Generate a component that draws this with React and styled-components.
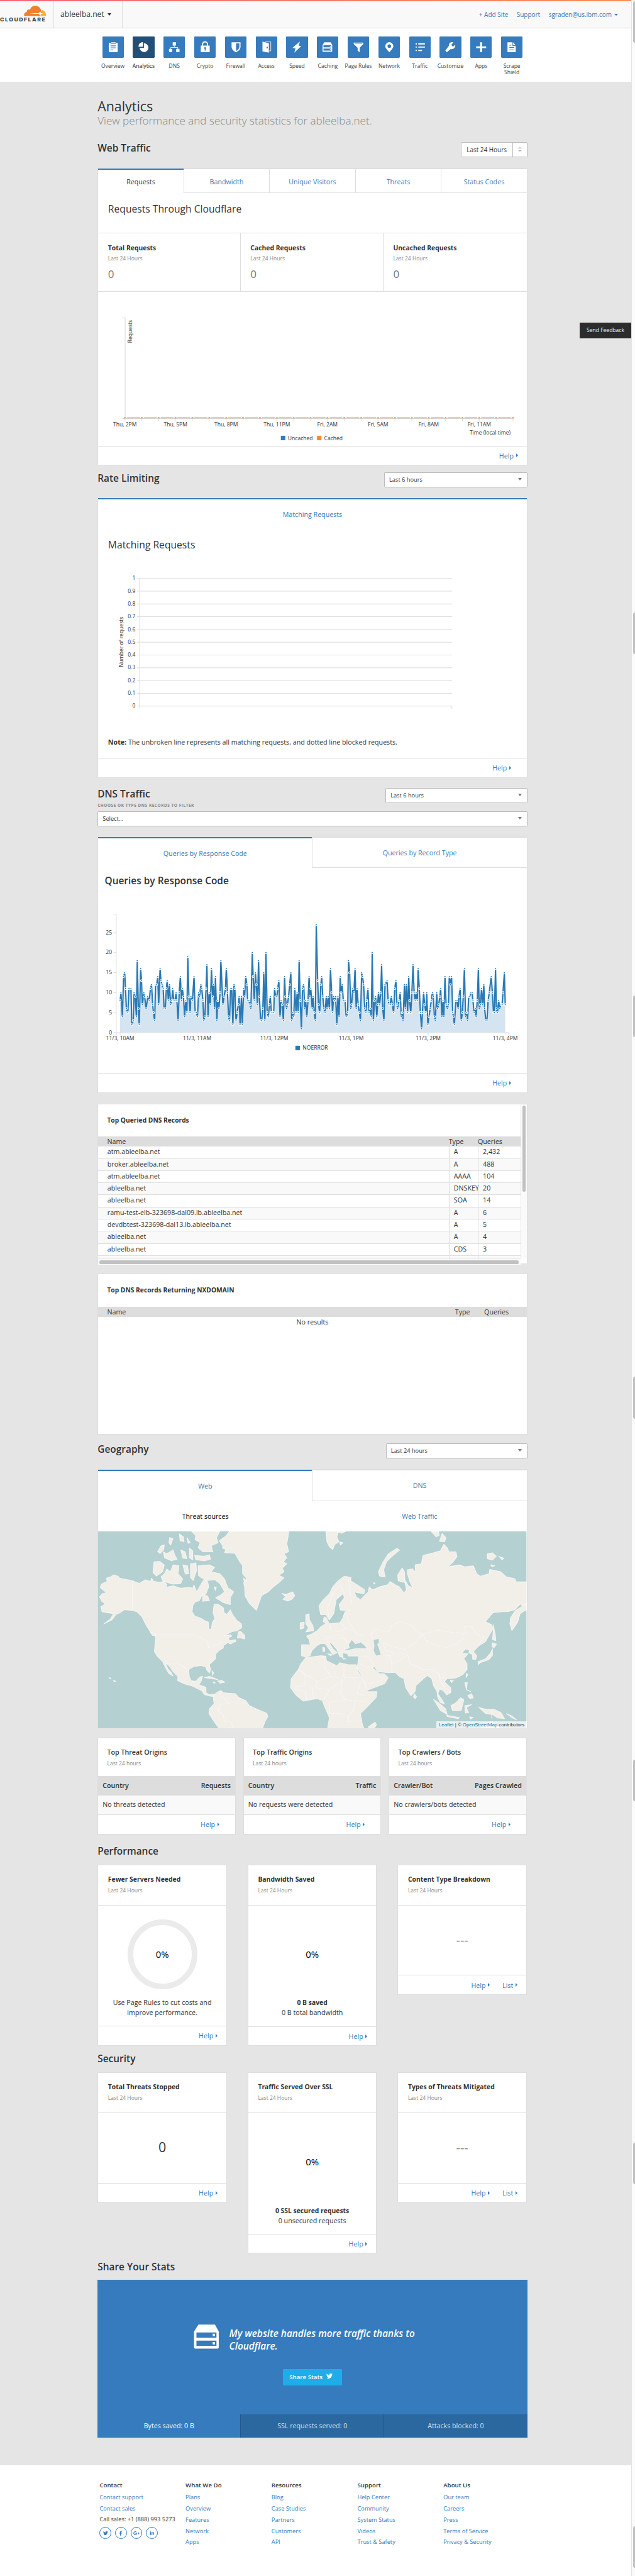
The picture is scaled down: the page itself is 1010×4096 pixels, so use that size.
import React from "react";
import styled, { createGlobalStyle, css } from "styled-components";
import { FaTwitter, FaFacebookF, FaGooglePlusG, FaLinkedinIn } from "react-icons/fa";

const blue = "#357bbd";
const line = "#dedede";
const ink = "#333";

const GlobalStyle = createGlobalStyle`
  *, *::before, *::after { box-sizing: border-box; }
  html, body { margin: 0; padding: 0; background: #fafafa; overflow: hidden; }
  body { font-family: "Open Sans", "Noto Sans", sans-serif; color: ${ink}; }
`;

/* The design is drawn on a 1418px wide canvas and zoomed down as a whole. */
const Shell = styled.div`
  zoom: 0.712;
  display: flex;
  width: 1418.5px;
  height: 5752.8px;
  overflow: hidden;
  font-size: 15px;
`;
const Page = styled.div`
  width: 1410px;
  flex: none;
  background: #e5e5e5;
  position: relative;
`;
const ScrollRail = styled.div`
  flex: 1;
  display: flex;
  flex-direction: column;
  background: #fafafa;
  border-left: 1px solid #e4e4e4;
  padding: 3px 0 0 3px;
`;
const Thumb = styled.div`
  flex: none;
  height: 93px;
  margin-bottom: ${(p) => p.$gap}px;
  background: #c1c1c1;
  border-radius: 6px 0 0 6px;
`;

/* ---------- header ---------- */
const Rainbow = styled.div`
  height: 3px;
  background: linear-gradient(90deg, #f4687a, #f98f57);
`;
const TopBar = styled.header`
  display: flex;
  height: 60px;
  background: #f9f9f9;
  border-bottom: 1px solid #d9d9d9;
`;
const LogoCell = styled.div`
  width: 121px;
  border-right: 1px solid ${line};
`;
const SiteCell = styled.div`
  width: 153px;
  border-right: 1px solid ${line};
  display: flex;
  align-items: center;
  padding: 0 0 1px 14px;
  font-size: 17px;
  gap: 7px;
`;
const Caret = styled.span`
  border: solid transparent;
  border-width: ${(p) => p.$h}px ${(p) => p.$w / 2}px 0;
  border-top-color: currentColor;
`;
const UserLinks = styled.nav`
  flex: 1;
  display: flex;
  justify-content: flex-end;
  align-items: center;
  gap: 19px;
  padding: 1px 29px 0 0;
  font-size: 14px;
  color: ${blue};
  span { display: flex; align-items: center; gap: 6px; }
`;
const AppNav = styled.nav`
  height: 119px;
  padding: 18px 0 0 218px;
  background: #fff;
  display: grid;
  grid-template-columns: repeat(14, 68.57px);
`;
const AppItem = styled.div`
  display: flex;
  flex-direction: column;
  align-items: center;
  font-size: 12px;
  line-height: 14px;
  text-align: center;
  color: ${(p) => (p.$active ? "#111" : "#444")};
  span { margin-top: 13.5px; max-width: 64px; }
`;
const Tile = styled.svg`
  width: 48px;
  height: 48px;
  border-radius: 2px;
  background: ${(p) => (p.$active ? "#224f78" : blue)};
  fill: #fff;
`;

/* ---------- section scaffolding ---------- */
const Content = styled.main`
  width: 1178px;
  height: 5324px;
  padding: 36.7px 0 0 218px;
`;
const PageTitle = styled.h1`
  margin: 0;
  font-size: 30px;
  font-weight: 400;
  line-height: 36px;
`;
const PageSub = styled.p`
  margin: 0;
  font-size: 24px;
  font-weight: 300;
  line-height: 32px;
  color: #888;
`;
const SectionHead = styled.div`
  display: flex;
  justify-content: space-between;
  align-items: flex-start;
  height: ${(p) => p.$h}px;
  padding-top: ${(p) => p.$top}px;
`;
const Heading = styled.h2`
  margin: 0;
  font-size: 21.7px;
  font-weight: 600;
  line-height: 30px;
  white-space: nowrap;
`;
const Select = styled.div`
  display: flex;
  align-items: center;
  justify-content: space-between;
  width: ${(p) => p.$w}px;
  height: ${(p) => p.$h || 34}px;
  margin: ${(p) => p.$m || "1.6px 0 0"};
  padding: 0 11px 2px 10px;
  border: 1px solid #bbb;
  border-radius: 2px;
  background: #fff;
  font-size: 13px;
  i { color: #777; margin-top: -2px; }
`;
const Stepper = styled.div`
  display: flex;
  width: 149px;
  height: 34px;
  margin-top: 1.5px;
  border: 1px solid #bbb;
  border-radius: 2px;
  background: #fff;
  font-size: 14px;
  line-height: 32px;
  span { flex: 1; padding-left: 12px; border-right: 1px solid #bbb; }
  div { width: 31px; display: flex; flex-direction: column; align-items: center; justify-content: center; gap: 4px; }
`;
const Tri = styled.i`
  border: solid transparent;
  border-width: ${(p) => (p.$up ? "0 4.5px 4px" : "4px 4.5px 0")};
  border-${(p) => (p.$up ? "bottom" : "top")}-color: #aaa;
`;
const Card = styled.section`
  height: ${(p) => p.$h}px;
  margin-bottom: ${(p) => p.$mb || 0}px;
  border: 1px solid ${line};
  background: #fff;
`;
const Tabs = styled.div`
  display: flex;
  height: ${(p) => p.$h}px;
  margin-top: -1px;
`;
const Tab = styled.div`
  flex: 1;
  text-align: center;
  color: ${(p) => p.$color || blue};
  line-height: ${(p) => p.$lh}px;
  border-top: 1px solid ${line};
  border-bottom: 1px solid ${line};
  border-left: 1px solid ${line};
  ${(p) => p.$active && css`
    border-top: 3px solid ${blue};
    border-bottom-color: #fff;
    border-left: 0;
  `}
`;
const CardTitle = styled.h3`
  margin: 0;
  padding: ${(p) => p.$pad};
  font-size: ${(p) => (p.$weight ? 21.7 : 22)}px;
  font-weight: ${(p) => p.$weight || 400};
  line-height: 30px;
`;
const StatRow = styled.div`
  display: grid;
  grid-template-columns: 318px 319px 1fr;
  height: 132px;
  border-top: 1px solid ${line};
  border-bottom: 1px solid ${line};
`;
const Stat = styled.div`
  padding: 20px 0 0 22px;
  border-right: 1px solid ${line};
  &:last-child { border-right: 0; }
  h4 { margin: 0; font-size: 14.6px; line-height: 24px; font-weight: 700; }
  p { margin: 0; font-size: 12px; line-height: 20px; color: #888; padding-top: 2px; }
  b { display: block; font-size: 24px; font-weight: 400; line-height: 30px; color: #777; margin-top: 9px; }
`;
const Foot = styled.div`
  display: flex;
  justify-content: flex-end;
  align-items: center;
  gap: 28px;
  height: ${(p) => p.$h || 44}px;
  padding: 0 ${(p) => p.$r}px 0 0;
  border-top: 1px solid ${line};
  color: ${blue};
`;
const HelpLink = styled.a`
  display: flex;
  align-items: center;
  gap: 5px;
  &::after {
    content: "";
    margin-top: -1px;
    border: solid transparent;
    border-width: 5px 0 5px 5px;
    border-left-color: ${blue};
  }
`;
const Plot = styled.svg`
  display: block;
  width: 957px;
  height: ${(p) => p.$h}px;
  font-size: 12px;
  fill: ${ink};
`;
const Note = styled.p`
  margin: 0;
  height: ${(p) => p.$h}px;
  padding: 17px 0 0 22px;
  line-height: 22px;
  b { font-weight: 700; }
`;
const FilterLabel = styled.div`
  font-size: 9px;
  font-weight: 700;
  letter-spacing: 0.8px;
  line-height: 14px;
  color: #888;
`;

/* ---------- DNS tables ---------- */
const TableTitle = styled.h4`
  margin: 0;
  height: 72px;
  padding: 24px 0 0 20px;
  font-size: 14.4px;
  font-weight: 700;
  line-height: 24px;
`;
const TableHead = styled.div`
  display: grid;
  grid-template-columns: 1fr 65px ${(p) => p.$last}px;
  height: 23px;
  line-height: 23px;
  padding-left: 20px;
  background: #ddd;
`;
const ScrollBody = styled.div`
  display: flex;
  height: 344px;
`;
const ScrollView = styled.div`
  width: 943px;
  overflow: hidden;
`;
const Track = styled.div`
  flex: 1;
  background: #fafafa;
  border-left: 1px solid #e6e6e6;
  padding: 3px 3px 0;
  &::before { content: ""; display: block; height: 193px; border-radius: 4px; background: #c1c1c1; }
`;
const TrackX = styled.div`
  height: 14px;
  width: 943px;
  padding: 3px 4px 0 3px;
  border-top: 1px solid #e6e6e6;
  background: #fafafa;
  &::before { content: ""; display: block; height: 8px; border-radius: 4px; background: #c1c1c1; }
`;
const Row = styled.div`
  display: grid;
  grid-template-columns: 1fr 65px 95px;
  height: 27.07px;
  line-height: 25px;
  border-bottom: 1px solid ${line};
  &:nth-child(even) { background: #f9f9f9; }
  span { border-left: 1px solid ${line}; padding-left: 10px; white-space: nowrap; }
  span:first-child { border: 0; padding-left: 20.5px; }
`;
const Empty = styled.div`
  text-align: center;
  line-height: 23px;
`;

/* ---------- map ---------- */
const SubTabs = styled.div`
  display: grid;
  grid-template-columns: 1fr 1fr;
  height: 67.5px;
  line-height: 69px;
  text-align: center;
  color: ${blue};
  span:first-child { color: #000; }
`;
const MapBox = styled.div`
  position: relative;
  height: 440px;
  svg { display: block; width: 957px; height: 440px; }
`;
const Credit = styled.div`
  position: absolute;
  right: 0;
  bottom: 0;
  height: 16px;
  padding: 0 5px;
  background: rgba(255, 255, 255, 0.7);
  font: 11px/16px "Liberation Sans", Arial, sans-serif;
  white-space: nowrap;
  a { color: #0078a8; }
`;

/* ---------- small cards ---------- */
const CardRow = styled.div`
  display: grid;
  grid-template-columns: repeat(3, 1fr);
  column-gap: ${(p) => p.$gap}px;
  align-items: start;
  width: 959px;
  height: ${(p) => p.$h}px;
`;
const MiniHead = styled.div`
  height: ${(p) => p.$h}px;
  padding: ${(p) => p.$pad};
  border-bottom: ${(p) => (p.$rule ? `1px solid ${line}` : "0")};
  h4 {
    margin: 0;
    font-size: ${(p) => (p.$rule ? 14.6 : 15)}px;
    line-height: 24px;
    font-weight: ${(p) => (p.$rule ? 700 : 600)};
    white-space: nowrap;
  }
  p { margin: 2px 0 0; font-size: 12px; line-height: 20px; color: #888; }
`;
const OriginHead = styled.div`
  display: flex;
  justify-content: space-between;
  height: 44px;
  padding: 0 10px;
  line-height: 43px;
  font-weight: 600;
  background: #ddd;
`;
const OriginBody = styled.div`
  height: 42px;
  padding-left: 10px;
  line-height: 42px;
  background: #f9f9f9;
`;
const Figure = styled.div`
  height: ${(p) => p.$h}px;
  padding-top: ${(p) => p.$top}px;
  text-align: center;
  line-height: 22.5px;
  b { font-weight: 700; font-size: 14.6px; }
`;
const BigText = styled.div`
  font-size: ${(p) => p.$size}px;
  line-height: 40px;
  color: ${(p) => p.$color};
  font-weight: ${(p) => p.$weight || 400};
`;
const Ring = styled.div`
  width: 156px;
  height: 156px;
  margin: 0 auto 19px;
  border: 14px solid ${(p) => (p.$bare ? "transparent" : "#ebebeb")};
  border-radius: 50%;
  display: flex;
  align-items: center;
  justify-content: center;
  font-size: 21px;
  color: #000;
`;

/* ---------- share banner ---------- */
const Banner = styled.section`
  display: flex;
  flex-direction: column;
  align-items: center;
  height: 352px;
  background: ${blue};
  color: #fff;
`;
const Quote = styled.div`
  display: flex;
  width: 960px;
  height: 199px;
  padding: 98px 0 0 214px;
  gap: 23px;
  font-size: 21.6px;
  font-weight: 600;
  font-style: italic;
  line-height: 28px;
  p { margin: 9px 0 0; width: 430px; }
  svg { width: 57px; height: 57px; fill: #fff; }
`;
const ShareButton = styled.button`
  display: flex;
  align-items: center;
  width: 133px;
  height: 36px;
  padding: 0 0 0 15px;
  gap: 9px;
  border: 0;
  border-radius: 2px;
  background: #1fadea;
  color: #fff;
  font: 600 13.6px "Open Sans", sans-serif;
  svg { margin-top: -6px; }
`;
const ShareTabs = styled.div`
  display: grid;
  grid-template-columns: 319px 320px 1fr;
  width: 960px;
  height: 52px;
  margin-top: auto;
  line-height: 51px;
  text-align: center;
`;
const ShareTab = styled.div`
  ${(p) => !p.$active && css`
    background: #2b689f;
    border-left: 1px solid #245888;
    color: #d5e1ec;
  `}
`;

/* ---------- footer ---------- */
const Footer = styled.footer`
  height: 247px;
  padding: 32px 0 0 222.5px;
  background: #fff;
  display: grid;
  grid-template-columns: repeat(5, 192px);
  font-size: 13px;
  color: ${blue};
`;
const FootCol = styled.div`
  display: flex;
  flex-direction: column;
  line-height: 25px;
  white-space: nowrap;
  h5 { margin: 0 0 2px; font-size: 13.6px; font-weight: 600; line-height: 25px; color: ${ink}; }
  em { font-style: normal; color: ${ink}; margin-top: -1px; }
`;
const Socials = styled.div`
  display: flex;
  gap: 8px;
  margin-top: 5px;
`;
const Social = styled.a`
  width: 26.5px;
  height: 26.5px;
  display: flex;
  align-items: center;
  justify-content: center;
  border: 1px solid ${blue};
  border-radius: 50%;
`;
const Feedback = styled.button`
  position: absolute;
  right: 0;
  top: 720px;
  width: 115px;
  height: 35px;
  border: 0;
  background: #2c2c2c;
  color: #eee;
  font: 12px "Open Sans", sans-serif;
`;

const ServerShape = () => (
  <path fillRule="evenodd" d="M16.5 13H31L34.3 19V32.8a1.2 1.2 0 0 1-1.2 1.2H13.9a1.2 1.2 0 0 1-1.2-1.2V19zM14.8 19.8v4.6h17.5v-4.6zM14.8 27v4.6h17.5V27zM29 21h2v2h-2zM29 28.3h2v2h-2z" />
);

const navItems = [
  ["Overview", <path fillRule="evenodd" d="M14.3 14H18v2.6h12V14h4v21H14.3zM19.3 13h10v2.2h-10zM18 20v1.6h12V20zM18 24.5V26h12v-1.5zM18 29v1.5h6V29z" />],
  ["Analytics", <g><path d="M25.2 15.2A9.8 9.8 0 1 1 15.6 25.8h9.6z" /><path d="M23 12.5V23H12.8A10.3 10.3 0 0 1 23 12.5z" /></g>],
  ["DNS", <g><path d="M20.6 13H28v7.3h-7.4zM12.3 27.7h7.4V35h-7.4zM28.4 27.7h7.4V35h-7.4z" /><path d="M24.2 20v4.5M16 28v-3.5h16V28" fill="none" stroke="#fff" strokeWidth="1.2" /></g>],
  ["Crypto", <g><path d="M18.500 21v-3.500a5.500 5.500 0 0 1 11 0V21" fill="none" stroke="#fff" strokeWidth="2.600" /><path fillRule="evenodd" d="M14.500 20.500h20V35h-20zM24.300 24a2 2 0 0 0-1 3.800V31.500h2v-3.700a2 2 0 0 0-1-3.800z" /></g>],
  ["Firewall", <path fillRule="evenodd" d="M14.500 13h20v10c0 6-5 10-10 12.500C19.500 33 14.500 29 14.500 23zM24.500 15.500V32.500c4-2.500 7.500-5.500 7.500-9.800v-7.200z" />],
  ["Access", <g><path d="M21 12h12.300v20.300H29.500" fill="none" stroke="#fff" strokeWidth="1.200" /><path fillRule="evenodd" d="M14.700 11.400L29 15v21l-14.300-2.700zM25.200 22.800a1.500 2 0 1 0 0 4 1.500 2 0 0 0 0-4z" /></g>],
  ["Speed", <path d="M30.800 11.300L13.900 25.700l7.100.7L18.400 36l15.500-14.600-5.400-.5z" />],
  ["Caching", <ServerShape />],
  ["Page Rules", <path fillRule="evenodd" d="M13.500 13.700h21.200v3l-8 8.600V35L22.300 32v-6.700l-8.800-8.600zM15.500 15v1.300h17.200V15z" />],
  ["Network", <path fillRule="evenodd" d="M24.200 12.700a9 9 0 0 0-9 9c0 4 4.500 8.500 9 13.400 4.500-4.900 9-9.400 9-13.400a9 9 0 0 0-9-9zm0 4.800a4 4 0 1 1 0 8 4 4 0 0 1 0-8z" />],
  ["Traffic", <path d="M14 15h3v3h-3zM20 15h15v3H20zM14 22.300h3v2.800h-3zM20 22.300h15v2.800H20zM14 29.600h3v3h-3zM20 29.600h8.500v3H20z" />],
  ["Customize", <path d="M31 13.300c-5-2-10.300 1.300-9.900 7.300L13 31.500l3.500 3.700 8.500-7.100c6 1.500 11.600-3.500 10-9.800l-3.700 3.700-3.300-.7-1-3.500z" />],
  ["Apps", <path d="M22 13h4.500v9H35.500v4H26.500v9H22v-9h-9v-4h9z" />],
  ["Scrape Shield", <path fillRule="evenodd" d="M14.300 13H25.500v8h7.200v14H14.300zM27 13l5.700 6.500H27zM18.500 19v1.400h4.500V19zM18.500 24v1.400h11V24zM18.500 29v1.400h11V29z" />],
];

const records = [
  ["atm.ableelba.net", "A", "2,432"],
  ["broker.ableelba.net", "A", "488"],
  ["atm.ableelba.net", "AAAA", "104"],
  ["ableelba.net", "DNSKEY", "20"],
  ["ableelba.net", "SOA", "14"],
  ["ramu-test-elb-323698-dal09.lb.ableelba.net", "A", "6"],
  ["devdbtest-323698-dal13.lb.ableelba.net", "A", "5"],
  ["ableelba.net", "A", "4"],
  ["ableelba.net", "CDS", "3"],
  ["", "", ""],
];

const series = "107 8,110 10,115 4,119 14,123 15,126 11,129 6,134 5,138 11,145 11,148 2,153 3,156 10,160 9,164 4,167 18,171 6,174 2,179 16,182 13,185 7,190 10,193 9,198 6,204 9,209 8,213 11,217 12,221 7,224 5,228 3,231 12,235 12,239 14,242 7,247 16,250 13,254 12,258 11,261 6,265 6,269 11,272 13,276 8,280 12,284 7,288 8,291 11,295 8,299 8,303 10,306 8,310 3,314 10,318 14,322 8,325 11,329 9,333 4,337 8,341 5,344 19,348 9,352 5,355 9,360 8,366 14,370 5,374 5,378 4,382 10,385 9,390 12,393 11,397 8,400 3,404 4,408 11,411 17,415 4,419 10,423 7,427 16,431 9,434 12,438 6,441 14,446 3,449 8,453 6,457 10,460 18,467 7,471 9,476 11,479 16,483 10,487 4,490 3,494 11,498 11,502 2,506 12,509 11,513 3,517 5,521 7,524 9,527 2,532 9,535 2,540 11,543 9,547 14,551 12,554 8,558 8,562 7,565 6,570 20,573 14,577 8,581 15,584 12,588 7,592 18,595 9,599 3,603 3,607 6,610 15,614 3,618 20,622 5,626 4,630 7,633 9,637 5,641 5,645 5,648 11,652 9,656 9,659 11,663 13,667 4,671 8,675 7,679 3,683 14,686 9,690 6,693 7,697 9,701 12,705 15,708 3,712 5,715 4,719 11,723 5,727 10,731 5,734 18,738 8,742 1,746 11,750 12,754 6,757 8,761 4,765 8,769 14,772 9,775 11,780 6,783 9,787 5,791 3,794 27,799 13,802 7,806 5,810 12,813 14,817 9,821 6,825 5,829 9,832 6,836 9,840 6,844 16,848 10,851 5,855 9,858 8,862 9,866 2,870 9,874 4,878 14,881 10,885 12,889 8,895 8,899 4,904 5,907 18,911 15,915 6,918 7,922 11,926 10,930 16,934 6,937 11,941 7,945 5,949 3,953 15,956 14,960 12,964 6,968 5,971 8,975 11,979 5,983 6,987 4,990 20,994 3,998 8,1002 9,1006 4,1009 7,1012 10,1016 7,1020 10,1023 17,1027 6,1031 3,1035 12,1042 13,1046 8,1049 7,1053 7,1057 9,1061 7,1065 5,1069 11,1073 13,1077 7,1079 6,1084 8,1088 10,1092 4,1095 5,1098 3,1103 12,1106 6,1110 12,1114 5,1118 14,1121 8,1125 5,1129 10,1133 17,1137 10,1141 8,1144 10,1148 8,1151 16,1155 11,1159 5,1163 1,1166 5,1170 10,1174 7,1178 5,1181 10,1185 2,1189 4,1193 6,1197 8,1201 10,1204 9,1208 4,1211 3,1216 10,1219 6,1223 7,1227 9,1230 11,1234 4,1238 8,1241 4,1245 14,1249 7,1253 6,1257 7,1260 14,1264 12,1268 14,1272 5,1275 4,1278 2,1283 8,1287 8,1291 6,1294 9,1298 11,1302 3,1306 5,1309 9,1313 16,1317 4,1321 5,1324 3,1328 9,1332 9,1336 10,1340 10,1343 8,1347 5,1351 6,1354 4,1358 8,1362 16,1365 6,1369 7,1373 11,1377 7,1381 12,1384 6,1388 3,1392 3,1396 8,1400 10,1407 14,1411 10,1415 5,1418 5,1422 16,1425 6,1429 5,1433 8,1437 6,1441 7,1445 7,1448 10,1453 15,1456 7"
  .split(",")
  .map((pair) => pair.split(" ").map(Number))
  .map(([t, v]) => [268.2 + (t - 107) * 0.63778, 2306.2 - v * 8.93]);

function RequestsChart() {
  const step = (1146 - 279) / 23;
  const labels = ["Thu, 2PM", "Thu, 5PM", "Thu, 8PM", "Thu, 11PM", "Fri, 2AM", "Fri, 5AM", "Fri, 8AM", "Fri, 11AM"];
  const xs = Array.from({ length: 24 }, (_, i) => 279 + i * step);
  return (
    <Plot $h={343} viewBox="219 651.5 957 343">
      <path d="M273 709.5h6.500V934.500M273 934.500H1146.500" fill="none" stroke="#d8d8d8" strokeWidth="1.400" />
      {xs.map((x) => <path key={x} d={`M${x} 934v7`} stroke="#d8d8d8" strokeWidth="1.200" />)}
      {xs.slice(1).map((x) => <path key={x} d={`M${x - step + 4.500} 933h${step - 9}`} stroke="#f6892e" strokeWidth="1.800" />)}
      {xs.map((x) => <path key={x} d={`M${x - 2.600} 934a2.600 2.600 0 0 1 5.200 0z`} fill="#f6892e" />)}
      {labels.map((l, i) => <text key={l} x={279 + i * 3 * step} y="951.5" textAnchor="middle">{l}</text>)}
      <text transform="translate(294.500 714.500) rotate(-90)" textAnchor="end">Requests</text>
      <text x="1140.500" y="970" textAnchor="end">Time (local time)</text>
      <rect x="627.300" y="973" width="10" height="10" fill={blue} />
      <text x="643" y="983">Uncached</text>
      <rect x="708" y="973" width="10" height="10" fill="#f6892e" />
      <text x="724" y="983">Cached</text>
    </Plot>
  );
}

function MatchingChart() {
  return (
    <Plot $h={360} viewBox="219 1270 957 360">
      {Array.from({ length: 11 }, (_, i) => (
        <g key={i}>
          <path d={`M306 ${1292 + i * 28.52}H1010`} stroke="#dcdcdc" strokeWidth="1.400" />
          <text x="302.300" y={1295.700 + i * 28.52} textAnchor="end">{i === 0 ? "1" : i === 10 ? "0" : `0.${10 - i}`}</text>
        </g>
      ))}
      <path d="M311.600 1292V1583.500M1009.500 1577v6.500" stroke="#dcdcdc" strokeWidth="1.300" />
      <text transform="translate(275 1434) rotate(-90)" textAnchor="middle">Number of requests</text>
    </Plot>
  );
}

function QueriesChart() {
  const path = series.map(([x, y]) => `${x.toFixed(1)} ${y.toFixed(1)}`).join("L");
  const times = ["11/3, 10AM", "11/3, 11AM", "11/3, 12PM", "11/3, 1PM", "11/3, 2PM", "11/3, 4PM"];
  return (
    <Plot $h={396} viewBox="219 2000 957 396">
      <path d="M253.500 2041.600h6V2312M259.500 2306.200H1136.500v6" fill="none" stroke="#d8d8d8" strokeWidth="1.300" />
      {[0, 5, 10, 15, 20, 25].map((v) => (
        <g key={v}>
          <path d={`M253.500 ${2306.200 - v * 8.93}h6`} stroke="#d8d8d8" strokeWidth="1.300" />
          <text x="250" y={2309.800 - v * 8.93} textAnchor="end">{v}</text>
        </g>
      ))}
      <path d={`M268.200 2306L${path}L1128.600 2306z`} fill="#d5e4f1" />
      <path d={`M${path}`} fill="none" stroke="#2879b5" strokeWidth="3" strokeLinejoin="bevel" />
      {series.map(([x, y], i) => <circle key={i} cx={x} cy={y} r="2.200" fill="#2879b5" stroke="#fff" strokeWidth="1.600" />)}
      {times.map((t, i) => (
        <g key={t}>
          <path d={`M${268.200 + i * 172.080} 2306v6`} stroke="#d8d8d8" strokeWidth="1.300" />
          <text x={268.200 + i * 172.080} y="2323.600" textAnchor="middle">{t}</text>
        </g>
      ))}
      <rect x="659.800" y="2335.500" width="10" height="10" fill="#2879b5" />
      <text x="676" y="2344.800">NOERROR</text>
    </Plot>
  );
}

const land = [
  "M30 770L33 752L50 738L48 722L60 715L69 705L82 712L86 722L110 730L123 735L143 748L160 730L175 738L178 722L185 738L200 742L215 738L222 755L220 768L240 760L262 772L285 768L297 772L300 755L308 790L318 760L326 735L332 730L340 740L343 765L335 800L322 812L316 835L303 842L297 860L295 890L303 912L320 922L332 935L342 942L343 975L350 980L353 942L360 925L355 895L358 852L370 852L385 870L387 895L395 903L405 880L412 905L425 935L437 950L438 970L425 985L410 990L398 1000L388 1010L405 1005L410 1012L400 1020L402 1035L420 1030L422 1038L405 1052L398 1045L385 1060L385 1072L372 1085L362 1105L363 1125L345 1155L348 1180L345 1198L338 1185L333 1165L320 1160L300 1165L285 1180L287 1215L292 1235L305 1238L318 1215L325 1213L322 1235L315 1255L325 1262L335 1268L335 1295L345 1305L358 1303L357 1315L345 1312L330 1305L322 1285L295 1262L270 1250L253 1235L254 1215L240 1190L228 1160L218 1148L225 1175L235 1195L240 1212L228 1200L218 1170L210 1140L195 1115L186 1090L188 1050L190 1015L178 1000L170 980L160 950L150 915L135 890L122 884L100 880L88 895L75 905L65 930L40 952L60 925L68 900L50 895L35 890L32 865L45 850L35 840L28 815L35 800L48 795Z",
  "M358 1305L370 1290L378 1284L385 1295L400 1298L420 1300L430 1320L450 1335L460 1360L485 1380L510 1398L513 1415L505 1440L498 1474L372 1474L358 1440L343 1400L345 1375L358 1350L356 1325Z",
  "M402 488L392 510L373 535L383 560L382 572L392 578L388 595L418 598L430 635L440 660L440 700L452 725L443 745L446 770L447 810L460 850L480 884L487 850L495 810L515 790L530 765L545 745L560 720L545 708L560 690L555 672L568 650L558 640L568 620L560 600L573 590L568 550L574 488Z",
  "M553 798L565 803L585 790L591 810L583 828L570 837L556 828L564 815Z",
  "M293 488L375 488L365 520L370 545L350 560L355 590L325 590L312 570L318 545L303 530L305 510Z",
  "M312 660L345 655L360 668L350 690L375 700L388 725L398 770L415 790L405 820L405 855L385 845L362 820L378 805L388 790L375 750L360 730L335 735L313 710Z",
  "M215 700L222 675L232 690L240 655L257 660L255 700L268 725L262 750L240 752L225 745L210 735L205 715Z",
  "M185 640L202 638L215 655L210 690L192 712L182 695Z",
  "M195 590L205 560L215 555L213 580L203 600ZM212 590L222 600L240 580L245 605L252 628L235 635L215 620ZM258 500L270 515L272 540L260 535ZM280 518L290 545L283 548ZM230 518L240 525L233 558L228 545ZM262 580L275 590L280 625L268 622ZM287 570L297 585L297 632L287 620ZM302 608L330 612L345 605L348 628L330 636L305 630Z",
  "M268 655L282 660L285 700L275 702ZM290 650L306 645L308 685L298 735L290 720ZM325 800L340 812L345 835L325 838ZM358 765L365 768L362 785Z",
  "M425 1022L428 990L435 988L447 1008L446 1027L436 1022ZM174 992L188 1000L192 1013L180 1008ZM443 720L452 735L445 742Z",
  "M330 1220L345 1213L370 1230L350 1225ZM368 1236L380 1233L390 1243L375 1248ZM355 1240L362 1246L357 1248ZM352 1185L357 1195L354 1210ZM68 1232L75 1238L70 1241ZM56 1218L62 1224L58 1226Z",
  "M660 860L672 830L690 800L700 765L715 735L733 712L753 718L752 735L775 760L792 780L790 800L770 795L762 790L768 815L780 830L788 815L802 790L805 765L815 780L835 765L858 755L865 738L880 755L892 765L905 795L912 780L908 745L888 735L887 705L900 670L907 690L908 730L918 760L930 770L922 740L915 700L915 680L930 675L938 690L937 655L955 650L960 608L990 595L1010 585L1020 552L1030 570L1035 590L1055 590L1058 615L1045 645L1032 665L1065 655L1080 665L1105 660L1115 700L1125 712L1150 700L1152 678L1185 690L1200 715L1225 725L1228 740L1258 740L1258 885L1240 852L1225 880L1205 890L1190 890L1162 895L1140 940L1158 955L1162 975L1150 1010L1140 1040L1122 1060L1113 1075L1105 1090L1115 1110L1112 1130L1103 1128L1102 1105L1092 1095L1093 1080L1082 1078L1072 1098L1090 1100L1078 1125L1087 1150L1087 1180L1075 1205L1055 1222L1040 1225L1030 1225L1022 1240L1040 1270L1040 1295L1028 1307L1018 1285L1008 1278L1003 1300L1015 1330L1022 1352L1010 1345L1002 1318L1000 1290L990 1260L985 1225L972 1210L962 1225L940 1260L937 1290L925 1312L910 1270L905 1225L892 1215L880 1195L855 1195L830 1190L820 1165L815 1170L835 1200L848 1200L860 1220L850 1250L800 1283L795 1260L780 1200L770 1170L772 1150L775 1112L745 1112L738 1085L765 1075L800 1075L790 1055L775 1035L778 1045L765 1050L755 1030L745 1055L748 1070L735 1080L740 1100L728 1095L730 1120L720 1115L712 1080L695 1045L690 1045L700 1075L713 1095L700 1105L690 1080L678 1050L665 1050L655 1060L640 1085L635 1110L622 1118L610 1110L610 1055L635 1055L632 1030L624 1012L640 1000L655 985L665 965L680 950L672 940L675 915L682 920L690 950L720 945L728 925L735 890L750 885L722 882L718 855L733 820L730 800L710 830L703 900L690 932L680 905L665 905Z",
  "M622 1120L665 1110L680 1112L682 1135L712 1160L720 1145L745 1155L768 1155L772 1185L790 1240L800 1290L828 1290L825 1320L795 1375L780 1400L785 1450L790 1474L685 1474L690 1420L675 1360L670 1335L655 1325L615 1338L595 1310L578 1270L580 1225L600 1180L608 1150Z",
  "M622 905L632 900L633 930L643 960L645 985L622 992L630 970L622 950ZM606 945L618 942L617 972L606 978ZM831 690L845 640L860 600L885 572L893 582L870 615L855 640L847 680L851 717L835 712Z",
  "M680 488L717 488L712 515L718 540L705 555L700 580L690 565L683 540ZM712 488L738 488L725 498ZM720 540L730 545L722 557ZM983 488L1005 488L1007 508L998 516ZM1007 538L1015 498L1027 520L1022 540ZM1145 600L1160 595L1172 612L1160 632L1145 625ZM1178 612L1193 622L1188 632ZM1155 655L1167 660L1158 665ZM818 742L823 750L818 752Z",
  "M1212 920L1225 885L1258 850L1258 880L1240 900L1232 945L1216 985L1210 950ZM1162 955L1168 1000L1170 1035L1160 1030L1162 990ZM1160 1045L1172 1052L1165 1070L1158 1065ZM1160 1075L1160 1110L1150 1130L1125 1145L1120 1155L1118 1140L1140 1125L1155 1095Z",
  "M1085 1198L1090 1205L1084 1220ZM1038 1232L1048 1235L1042 1246ZM935 1300L942 1315L938 1326L932 1318ZM1080 1245L1088 1245L1085 1280L1098 1290L1085 1280ZM1088 1310L1100 1300L1105 1322L1095 1325ZM990 1328L1005 1345L1025 1375L1030 1405L1010 1385ZM1028 1408L1065 1420L1062 1426L1030 1415ZM1040 1360L1055 1345L1068 1320L1078 1330L1070 1385L1045 1385ZM1080 1360L1100 1355L1085 1370L1092 1395L1082 1398ZM1120 1368L1140 1378L1165 1378L1185 1395L1195 1425L1175 1422L1160 1405L1140 1400L1130 1385ZM1095 1415L1105 1420L1095 1428ZM1200 1400L1215 1410L1230 1432L1215 1420Z",
  "M803 1465L822 1442L826 1455L820 1474L803 1474ZM1125 1474L1140 1450L1160 1438L1165 1455L1185 1474ZM685 1100L697 1103L695 1112ZM671 1068L677 1070L676 1092L671 1088ZM728 1124L738 1126L730 1128Z",
];
const borders = "M123 735V884M192 1003H293L320 1018L340 1040L342 1070L372 1050L385 1040M218 1148H250L265 1160L285 1185M378 1288L375 1310L390 1325L400 1350L375 1355L370 1385L385 1410L388 1440L405 1440L415 1474M430 1320L425 1352L450 1350M690 930L685 870L700 800L722 755M722 755L733 800M745 725L755 850M725 945L735 975L760 978L768 1000L788 1010M740 895L745 940L760 975M692 955L695 985L715 990L735 975M665 1010L690 1015L720 1005L735 1030L745 1050M665 1030L700 1020L740 1025M815 1020L810 1000L825 980L860 990L870 955L895 940L925 955L940 985L958 1003L975 995L1000 982L1050 995L1085 1000L1078 965L1100 965L1115 1005L1135 1015L1120 1060M958 1003L935 1050L905 1080L865 1060L845 1045L850 1080L880 1100L915 1105L925 1150L960 1180L985 1180L1000 1195L1010 1215L1030 1225M958 1003L975 1045L1025 1070L1060 1050L1078 1020M870 1195L870 1150L895 1130L910 1110M840 1105L865 1110L870 1150M775 1112L800 1112L820 1160M778 1150L800 1170L815 1165M800 1250L840 1235L845 1215M732 1155V1220H775M676 1112V1170L695 1212L655 1240L620 1200L600 1180M608 1185L620 1205V1260L590 1265M695 1212L728 1230L722 1300L735 1330L760 1335L795 1340M655 1240L650 1270L690 1280L725 1235M690 1280L675 1330M735 1330L690 1345L690 1400L720 1400L745 1415L760 1380L765 1335M745 1415L745 1440L785 1435M1005 1195L1010 1240L1025 1275M1158 1380V1425M590 1280L620 1285L625 1330M640 1265L645 1325M780 1240L770 1300L795 1310";

function WorldMap() {
  return (
    <svg viewBox="24 488 1234 986" preserveAspectRatio="none">
      <rect x="24" y="488" width="1234" height="986" fill="#b5d0d0" />
      <g fill="#f2efe9" stroke="#fff" strokeWidth="1.500" strokeLinejoin="round">
        {land.map((d, i) => <path key={i} d={d} />)}
      </g>
      <path d="M818 1032L832 1026L833 1045L828 1052L833 1075L838 1105L825 1110L818 1085L820 1060Z" fill="#b5d0d0" />
      <path d={borders} fill="none" stroke="#fbf3fa" strokeWidth="2" />
    </svg>
  );
}

function Logo() {
  return (
    <svg width="120" height="59" viewBox="0 3 120 59">
      <path d="M88 36c1-7 1-10 6-13 5-1 9 5 9 13z" fill="#fbad41" />
      <path d="M54 36c-1-5 2-9 6-9-1-4 3-7 7-5 2-6 7-9 12-9 7 0 12 5 13 12 1 4-1 8-3 11z" fill="#f08030" />
      <path d="M67 30.300l20-1 3-3.500 1.500 3.500 5 .8-5 1.500-1.500 4-2.500-4.200-20.500-.5z" fill="#fff" />
      <text x="0" y="48.600" textLength="103" lengthAdjust="spacingAndGlyphs" fontFamily="Inter, sans-serif" fontWeight="800" fontSize="11.500" letterSpacing="2" fill="#404041">CLOUDFLARE</text>
    </svg>
  );
}

const Dropdown = ({ label, ...rest }) => (
  <Select {...rest}>{label}<Caret as="i" $w={10} $h={6} /></Select>
);
const HelpFoot = ({ r, h, list }) => (
  <Foot $r={r} $h={h}><HelpLink>Help</HelpLink>{list && <HelpLink>List</HelpLink>}</Foot>
);

function OriginCard({ title, left, right, empty }) {
  return (
    <Card $h={216.4}>
      <MiniHead $h={84} $pad="19.500px 0 0 20px"><h4>{title}</h4><p>Last 24 hours</p></MiniHead>
      <OriginHead><span>{left}</span><span>{right}</span></OriginHead>
      <OriginBody>{empty}</OriginBody>
      <HelpFoot r={35.5} h={44.5} />
    </Card>
  );
}

function MetricCard({ title, h, figure, list, children, top }) {
  return (
    <Card $h={h}>
      <MiniHead $h={89.5} $pad="20px 0 0 22px" $rule><h4>{title}</h4><p>Last 24 Hours</p></MiniHead>
      <Figure $h={figure} $top={top}>{children}</Figure>
      <HelpFoot r={20} h={45} list={list} />
    </Card>
  );
}

const footer = [
  ["What We Do", "Plans", "Overview", "Features", "Network", "Apps"],
  ["Resources", "Blog", "Case Studies", "Partners", "Customers", "API"],
  ["Support", "Help Center", "Community", "System Status", "Videos", "Trust & Safety"],
  ["About Us", "Our team", "Careers", "Press", "Terms of Service", "Privacy & Security"],
];

export default function App() {
  return (
    <Shell>
      <GlobalStyle />
      <Page>
        <Rainbow />
        <TopBar>
          <LogoCell><Logo /></LogoCell>
          <SiteCell>ableelba.net<Caret $w={11} $h={6} /></SiteCell>
          <UserLinks>
            <span>+ Add Site</span>
            <span>Support</span>
            <span>sgraden@us.ibm.com<Caret $w={9} $h={5} /></span>
          </UserLinks>
        </TopBar>
        <AppNav>
          {navItems.map(([label, icon]) => (
            <AppItem key={label} $active={label === "Analytics"}>
              <Tile viewBox="0 0 48 48" $active={label === "Analytics"}>{icon}</Tile>
              <span>{label}</span>
            </AppItem>
          ))}
        </AppNav>
        <Content>
          <PageTitle>Analytics</PageTitle>
          <PageSub>View performance and security statistics for ableelba.net.</PageSub>

          <SectionHead $h={88.8} $top={28.8}>
            <Heading>Web Traffic</Heading>
            <Stepper><span>Last 24 Hours</span><div><Tri $up /><Tri /></div></Stepper>
          </SectionHead>
          <Card $h={664}>
            <Tabs $h={56}>
              {["Requests", "Bandwidth", "Unique Visitors", "Threats", "Status Codes"].map((t, i) => (
                <Tab key={t} $active={i === 0} $color={i === 0 ? ink : blue} $lh={i === 0 ? 54 : 57}>{t}</Tab>
              ))}
            </Tabs>
            <CardTitle $pad="21px 0 37.500px 22px">Requests Through Cloudflare</CardTitle>
            <StatRow>
              {["Total Requests", "Cached Requests", "Uncached Requests"].map((t) => (
                <Stat key={t}><h4>{t}</h4><p>Last 24 Hours</p><b>0</b></Stat>
              ))}
            </StatRow>
            <RequestsChart />
            <HelpFoot r={20} />
          </Card>

          <SectionHead $h={73} $top={13.7}>
            <Heading>Rate Limiting</Heading>
            <Dropdown $w={320} label="Last 6 hours" />
          </SectionHead>
          <Card $h={625}>
            <Tabs $h={56}><Tab $active $lh={68}>Matching Requests</Tab></Tabs>
            <CardTitle $pad="34px 0 37px 22px">Matching Requests</CardTitle>
            <MatchingChart />
            <Note $h={62.5}>
              <b>Note:</b> The unbroken line represents all matching requests, and dotted line blocked requests.
            </Note>
            <HelpFoot r={35} />
          </Card>

          <SectionHead $h={55} $top={20.8}>
            <Heading>DNS Traffic</Heading>
            <Dropdown $w={317} label="Last 6 hours" $m="1.600px 0 0" />
          </SectionHead>
          <FilterLabel>CHOOSE OR TYPE DNS RECORDS TO FILTER</FilterLabel>
          <Dropdown $w={960} label="Select..." $m="5.500px 0 22.500px" />
          <Card $h={573} $mb={23.2}>
            <Tabs $h={70}>
              <Tab $active $lh={69}>Queries by Response Code</Tab>
              <Tab $lh={69}>Queries by Record Type</Tab>
            </Tabs>
            <CardTitle $weight={600} $pad="13.500px 0 18px 14.500px">Queries by Response Code</CardTitle>
            <QueriesChart />
            <HelpFoot r={35} />
          </Card>

          <Card $h={358.7} $mb={21.4}>
            <ScrollBody>
              <ScrollView>
                <TableTitle>Top Queried DNS Records</TableTitle>
                <TableHead $last={95}><span>Name</span><span>Type</span><span>Queries</span></TableHead>
                <div>{records.map((r, i) => <Row key={i}>{r.map((c, j) => <span key={j}>{c}</span>)}</Row>)}</div>
              </ScrollView>
              <Track />
            </ScrollBody>
            <TrackX />
          </Card>
          <Card $h={358.8}>
            <TableTitle>Top DNS Records Returning NXDOMAIN</TableTitle>
            <TableHead $last={95}><span>Name</span><span>Type</span><span>Queries</span></TableHead>
            <Empty>No results</Empty>
          </Card>

          <SectionHead $h={78.1} $top={18.9}>
            <Heading>Geography</Heading>
            <Dropdown $w={316} label="Last 24 hours" />
          </SectionHead>
          <Card $h={577} $mb={22.3}>
            <Tabs $h={70}>
              <Tab $active $lh={69}>Web</Tab>
              <Tab $lh={69}>DNS</Tab>
            </Tabs>
            <SubTabs><span>Threat sources</span><span>Web Traffic</span></SubTabs>
            <MapBox>
              <WorldMap />
              <Credit><a>Leaflet</a> | © <a>OpenStreetMap</a> contributors</Credit>
            </MapBox>
          </Card>
          <CardRow $gap={16.5} $h={216.4}>
            <OriginCard title="Top Threat Origins" left="Country" right="Requests" empty="No threats detected" />
            <OriginCard title="Top Traffic Origins" left="Country" right="Traffic" empty="No requests were detected" />
            <OriginCard title="Top Crawlers / Bots" left="Crawler/Bot" right="Pages Crawled" empty="No crawlers/bots detected" />
          </CardRow>

          <SectionHead $h={67} $top={21.8}><Heading>Performance</Heading></SectionHead>
          <CardRow $gap={46} $h={404.9}>
            <MetricCard title="Fewer Servers Needed" h={404} figure={268.5} top={31}>
              <Ring>0%</Ring>
              Use Page Rules to cut costs and<br />improve performance.
            </MetricCard>
            <MetricCard title="Bandwidth Saved" h={404.9} figure={269.5} top={31}>
              <Ring $bare>0%</Ring>
              <b>0 B saved</b><br />0 B total bandwidth
            </MetricCard>
            <MetricCard title="Content Type Breakdown" h={290.6} figure={155.5} top={58} list>
              <BigText $size={28} $color="#888">---</BigText>
            </MetricCard>
          </CardRow>

          <SectionHead $h={59} $top={13.9}><Heading>Security</Heading></SectionHead>
          <CardRow $gap={46} $h={404.7}>
            <MetricCard title="Total Threats Stopped" h={290.6} figure={155.5} top={57}>
              <BigText $size={30} $color={ink}>0</BigText>
            </MetricCard>
            <MetricCard title="Traffic Served Over SSL" h={404.9} figure={269.5} top={31}>
              <Ring $bare>0%</Ring>
              <b>0 SSL secured requests</b><br />0 unsecured requests
            </MetricCard>
            <MetricCard title="Types of Threats Mitigated" h={290.6} figure={155.5} top={58} list>
              <BigText $size={28} $color="#888">---</BigText>
            </MetricCard>
          </CardRow>

          <SectionHead $h={58.8} $top={14.4}><Heading>Share Your Stats</Heading></SectionHead>
          <Banner>
            <Quote>
              <svg viewBox="12.500 12.300 22 22.300"><ServerShape /></svg>
              <p>My website handles more traffic thanks to Cloudflare.</p>
            </Quote>
            <ShareButton>Share Stats <FaTwitter size={14} /></ShareButton>
            <ShareTabs>
              <ShareTab $active>Bytes saved: 0 B</ShareTab>
              <ShareTab>SSL requests served: 0</ShareTab>
              <ShareTab>Attacks blocked: 0</ShareTab>
            </ShareTabs>
          </Banner>
        </Content>
        <Footer>
          <FootCol>
            <h5>Contact</h5>
            <a>Contact support</a>
            <a>Contact sales</a>
            <em>Call sales: +1 (888) 993 5273</em>
            <Socials>
              <Social><FaTwitter size={11} /></Social>
              <Social><FaFacebookF size={11} /></Social>
              <Social><FaGooglePlusG size={14} /></Social>
              <Social><FaLinkedinIn size={11} /></Social>
            </Socials>
          </FootCol>
          {footer.map(([h, ...links]) => (
            <FootCol key={h}><h5>{h}</h5>{links.map((l) => <a key={l}>{l}</a>)}</FootCol>
          ))}
        </Footer>
        <Feedback>Send Feedback</Feedback>
      </Page>
      <ScrollRail>
        {[1272, 762, 759, 762, 762, 764, 0].map((gap, i) => <Thumb key={i} $gap={gap} />)}
      </ScrollRail>
    </Shell>
  );
}
